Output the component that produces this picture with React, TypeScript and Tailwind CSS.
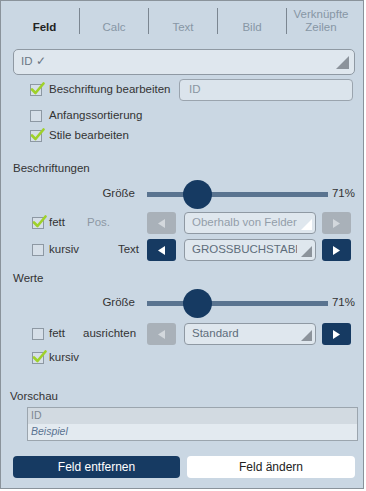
import React from 'react';

const FONT = { fontFamily: '"Liberation Sans", Arial, sans-serif' };

const Check: React.FC<{ checked?: boolean }> = ({ checked }) => (
    <span className="relative inline-block w-[12px] h-[12px] border border-[#8d98a3] bg-[#d6dfe8] shrink-0">
        {checked && (
            <svg className="absolute -left-[1px] -top-[4px]" width="15" height="15" viewBox="0 0 15 15">
                <path d="M2 8.5 L5.5 12 L13.5 2.5" fill="none" stroke="#9fd12a" strokeWidth="2.6" strokeLinecap="round" strokeLinejoin="round" />
            </svg>
        )}
    </span>
);

const Corner: React.FC<{ color: string; size?: number }> = ({ color, size = 11 }) => (
    <svg width={size} height={size} viewBox="0 0 10 10" className="shrink-0">
        <polygon points="10,0 10,10 0,10" fill={color} />
    </svg>
);

const Dropdown: React.FC<{ text: string; disabled?: boolean }> = ({ text, disabled }) => (
    <div className="w-[132px] h-[22px] rounded-[4px] border border-[#8f99a3] bg-[#dfe7ee] flex items-center pl-[7px] pr-[3px]">
        <span className={`flex-1 min-w-0 whitespace-nowrap overflow-hidden text-[11.5px] ${disabled ? 'text-[#939eaa]' : 'text-[#5e6d7b]'}`}>{text}</span>
        <span className="self-end mb-[3px] ml-[4px]">
            <Corner color={disabled ? '#ffffff' : '#8c939b'} />
        </span>
    </div>
);

const ArrowBtn: React.FC<{ dir: 'left' | 'right'; active?: boolean }> = ({ dir, active }) => (
    <div className={`w-[29px] h-[22px] rounded-[3px] flex items-center justify-center shrink-0 ${active ? 'bg-[#163a62]' : 'bg-[#a9b1b9]'}`}>
        <svg width="7" height="9" viewBox="0 0 7 9">
            <polygon points={dir === 'left' ? '7,0 7,9 0,4.5' : '0,0 0,9 7,4.5'} fill={active ? '#ffffff' : '#d3d8dd'} />
        </svg>
    </div>
);

const Slider: React.FC<{ pos: number }> = ({ pos }) => (
    <div className="flex items-center h-[30px]">
        <span className="w-[128px] pr-[5px] text-right text-[11.5px] text-[#333]">Größe</span>
        <div className="relative w-[181px] h-[30px] ml-[7px] flex items-center">
            <div className="w-full h-[5px] bg-[#5a7490]" />
            <div className="absolute top-[1px] w-[29px] h-[29px] rounded-full bg-[#163a62]" style={{ left: pos - 15 }} />
        </div>
        <span className="ml-[4px] text-[11.5px] text-[#333]">71%</span>
    </div>
);

const CtrlRow: React.FC<{
    checked?: boolean;
    box: string;
    label?: string;
    labelClass?: string;
    dd?: string;
    ddDisabled?: boolean;
    left?: boolean;
    right?: boolean;
}> = ({ checked, box, label, labelClass, dd, ddDisabled, left, right }) => (
    <div className="flex items-center h-[22px] pl-[20px]">
        <div className="w-[55px] flex items-center gap-[5px]">
            <Check checked={checked} />
            <span className="text-[11.5px] text-[#333]">{box}</span>
        </div>
        <span className={`w-[53px] text-[11.5px] whitespace-nowrap ${labelClass}`}>{label}</span>
        {dd !== undefined && (
            <div className="flex items-center ml-[7px]">
                <ArrowBtn dir="left" active={left} />
                <div className="ml-[8px]"><Dropdown text={dd} disabled={ddDisabled} /></div>
                <div className="ml-[6px]"><ArrowBtn dir="right" active={right} /></div>
            </div>
        )}
    </div>
);

const tabs = ['Feld', 'Calc', 'Text', 'Bild'];

export default function App() {
    return (
        <div style={FONT} className="w-[364px] h-[489px] border border-[#8a939b] bg-[#cad7e3] flex flex-col pl-[11px] pr-[8px] text-[#333]">
            {/* tabs */}
            <div className="flex h-[26px] mt-[7px] -ml-[2px]">
                {tabs.map((t, i) => (
                    <div key={t} className={`w-[69px] flex items-end justify-center ${i > 0 ? 'border-l border-[#7b8691]' : ''}`}>
                        <span className={`text-[11.5px] leading-[14px] ${i === 0 ? 'font-bold text-[#222]' : 'text-[#8796a5]'}`}>{t}</span>
                    </div>
                ))}
                <div className="w-[69px] border-l border-[#7b8691] flex flex-col items-center justify-end">
                    <span className="text-[11.5px] leading-[13px] text-[#8796a5] -mt-[2px]">Verknüpfte</span>
                    <span className="text-[11.5px] leading-[13px] text-[#8796a5]">Zeilen</span>
                </div>
            </div>

            {/* field dropdown */}
            <div className="mt-[15px] ml-[1px] w-[342px] h-[26px] rounded-[5px] border border-[#8f99a3] bg-[#dfe7ee] flex items-center justify-between pl-[7px] pr-[5px]">
                <span className="text-[11.5px] text-[#6c7884]">ID ✓</span>
                <span className="self-end mb-[5px]"><Corner color="#8c939b" size={13} /></span>
            </div>

            {/* options */}
            <div className="flex items-center h-[22px] mt-[4px] pl-[18px]">
                <Check checked />
                <span className="ml-[7px] w-[130px] text-[11.5px]">Beschriftung bearbeiten</span>
                <div className="w-[174px] h-[22px] rounded-[4px] border border-[#9aa4ae] bg-[#dbe4ec] flex items-center pl-[9px]">
                    <span className="text-[11.5px] text-[#8a96a1]">ID</span>
                </div>
            </div>
            <div className="flex items-center h-[20px] mt-[5px] pl-[18px]">
                <Check />
                <span className="ml-[7px] text-[11.5px]">Anfangssortierung</span>
            </div>
            <div className="flex items-center h-[20px] pl-[18px]">
                <Check checked />
                <span className="ml-[7px] text-[11.5px]">Stile bearbeiten</span>
            </div>

            {/* Beschriftungen */}
            <div className="mt-[15px] ml-[1px] text-[11.5px] leading-[14px]">Beschriftungen</div>
            <div className="mt-[4px]"><Slider pos={51} /></div>
            <div className="mt-[3px]">
                <CtrlRow checked box="fett" label="Pos." labelClass="text-[#8d98a3]" dd="Oberhalb von Feldern" ddDisabled />
            </div>
            <div className="mt-[5px]">
                <CtrlRow box="kursiv" label="Text" labelClass="text-right pr-[1px] text-[#333]" dd="GROSSBUCHSTABEN" left right />
            </div>

            {/* Werte */}
            <div className="mt-[10px] ml-[1px] text-[11.5px] leading-[14px]">Werte</div>
            <div className="mt-[3px]"><Slider pos={51} /></div>
            <div className="mt-[5px]">
                <div className="flex items-center h-[22px] pl-[20px]">
                    <div className="w-[55px] flex items-center gap-[5px]">
                        <Check />
                        <span className="text-[11.5px]">fett</span>
                    </div>
                    <span className="w-[53px] -ml-[4px] text-right text-[11.5px] whitespace-nowrap">ausrichten</span>
                    <div className="flex items-center ml-[11px]">
                        <ArrowBtn dir="left" />
                        <div className="ml-[8px]"><Dropdown text="Standard" /></div>
                        <div className="ml-[6px]"><ArrowBtn dir="right" active /></div>
                    </div>
                </div>
            </div>
            <div className="flex items-center h-[20px] mt-[3px] pl-[20px] gap-[5px]">
                <Check checked />
                <span className="text-[11.5px]">kursiv</span>
            </div>

            {/* Vorschau */}
            <div className="mt-[21px] -ml-[2px] text-[11.5px] leading-[14px]">Vorschau</div>
            <div className="mt-[4px] ml-[15px] w-[331px] border border-[#9ba5ae] flex flex-col">
                <div className="h-[16px] bg-[#d2dae1] pl-[3px] flex items-center text-[10.5px] text-[#7c8792]">ID</div>
                <div className="h-[16px] bg-[#e3eaf0] pl-[3px] flex items-center text-[10.5px] italic text-[#5a7290]">Beispiel</div>
            </div>

            {/* buttons */}
            <div className="flex mt-[15px] ml-[1px] gap-[7px]">
                <div className="w-[167px] h-[22px] rounded-[4px] bg-[#163a62] text-white text-[12px] flex items-center justify-center">Feld entfernen</div>
                <div className="w-[168px] h-[22px] rounded-[4px] bg-white text-[#222] text-[12px] flex items-center justify-center">Feld ändern</div>
            </div>
        </div>
    );
}
